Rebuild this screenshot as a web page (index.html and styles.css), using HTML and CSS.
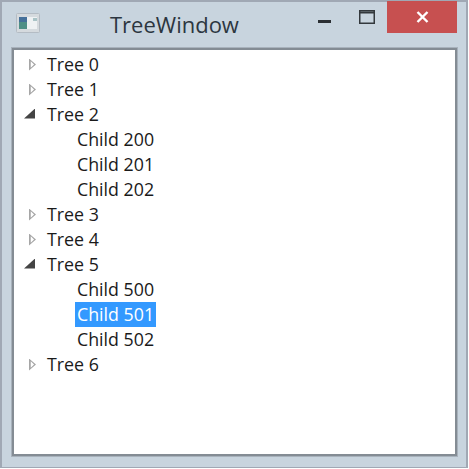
FILE: index.html
```html
<!DOCTYPE html>
<html lang="en">

<head>
  <meta charset="UTF-8" />
  <title>TreeWindow</title>
  <link rel="stylesheet" href="styles.css">
</head>

<body>
  <div class="window">
    <div class="titlebar">
      <svg class="app-icon" width="24" height="20" viewBox="0 0 24 20">
        <rect x="0.5" y="0.5" width="23" height="19" rx="1" fill="#d5dade" stroke="#b4bcc4" />
        <rect x="3" y="4" width="18" height="12" fill="#eef1f3" />
        <rect x="3" y="4" width="8" height="12" fill="#4e8f86" />
        <rect x="3" y="4" width="8" height="5" fill="#45709a" />
        <rect x="17" y="5" width="4" height="3" fill="#a9c3c6" />
      </svg>
      <div class="title">TreeWindow</div>
      <div class="controls">
        <svg class="btn-min" width="13" height="3" viewBox="0 0 13 3">
          <rect width="13" height="3" fill="#2b2f33" />
        </svg>
        <svg class="btn-max" width="16" height="14" viewBox="0 0 16 14">
          <rect x="0.75" y="0.75" width="14.5" height="12.5" fill="none" stroke="#33383c" stroke-width="1.5" />
          <rect x="1" y="1.5" width="14" height="2" fill="#33383c" />
        </svg>
        <div class="btn-close">
          <svg width="13" height="12" viewBox="0 0 13 12">
            <path d="M1.5 1 L11.5 11 M11.5 1 L1.5 11" stroke="#fff" stroke-width="2.4" fill="none" />
          </svg>
        </div>
      </div>
    </div>

    <div class="content">
      <ul class="tree">
        <li class="row"><span class="arrow closed"></span><span class="label">Tree 0</span></li>
        <li class="row"><span class="arrow closed"></span><span class="label">Tree 1</span></li>
        <li class="row"><span class="arrow open"></span><span class="label">Tree 2</span></li>
        <li class="row child"><span class="label">Child 200</span></li>
        <li class="row child"><span class="label">Child 201</span></li>
        <li class="row child"><span class="label">Child 202</span></li>
        <li class="row"><span class="arrow closed"></span><span class="label">Tree 3</span></li>
        <li class="row"><span class="arrow closed"></span><span class="label">Tree 4</span></li>
        <li class="row"><span class="arrow open"></span><span class="label">Tree 5</span></li>
        <li class="row child"><span class="label">Child 500</span></li>
        <li class="row child"><span class="label selected">Child 501</span></li>
        <li class="row child"><span class="label">Child 502</span></li>
        <li class="row"><span class="arrow closed"></span><span class="label">Tree 6</span></li>
      </ul>
    </div>
  </div>
</body>
</html>
```

FILE: styles.css
```css
html,
body {
  margin: 0;
  padding: 0;
}

body {
  width: 469px;
  height: 469px;
  overflow: hidden;
  background-color: #fff;
  font-family: "Open Sans", "Noto Sans", sans-serif;
  color: #1a1a1a;
}

.window {
  box-sizing: border-box;
  width: 468px;
  height: 468px;
  display: flex;
  flex-direction: column;
  background-color: #c8d4de;
  border: 2px solid #a0a8b4;
  border-bottom-width: 1px;
}

.titlebar {
  height: 46px;
  flex: none;
  display: flex;
  align-items: flex-start;
}

.app-icon {
  margin: 11px 0 0 14px;
  flex: none;
}

.title {
  margin: 7px 0 0 70px;
  font-size: 22px;
  line-height: 30px;
  color: #2c3640;
}

.controls {
  margin-left: auto;
  display: flex;
  align-items: flex-start;
}

.btn-min {
  margin: 18px 28px 0 0;
}

.btn-max {
  margin: 8px 12px 0 0;
}

.btn-close {
  width: 70px;
  height: 32px;
  margin: -1px 9px 0 0;
  background-color: #c75050;
  display: flex;
  align-items: center;
  justify-content: center;
}

.content {
  flex: none;
  box-sizing: border-box;
  width: 445px;
  height: 408px;
  margin-left: 10px;
  background-color: #fff;
  border: 2px solid #848c94;
  box-shadow: 0 0 0 1px #a8b2bc;
}

.tree {
  list-style: none;
  margin: 0;
  padding: 2px 0 0 0;
}

.row {
  height: 25px;
  display: flex;
  align-items: center;
  padding-left: 31px;
  font-size: 17.8px;
}

.row.child {
  padding-left: 61px;
}

.arrow {
  flex: none;
}

.arrow.closed {
  width: 7px;
  height: 12px;
  margin-left: -16px;
  margin-right: 9px;
  background-color: #a6a6a6;
  clip-path: polygon(0 0, 100% 50%, 0 100%, 0 0, 25% 22%, 25% 78%, 72% 50%, 25% 22%);
}

.arrow.open {
  width: 11px;
  height: 10px;
  margin: 0 10px 2px -21px;
  background-color: #444;
  clip-path: polygon(100% 0, 100% 100%, 0 100%);
}

.label {
  padding: 0 2px;
  line-height: 25px;
  white-space: nowrap;
}

.selected {
  background-color: #3399ff;
  color: #fff;
}
```
